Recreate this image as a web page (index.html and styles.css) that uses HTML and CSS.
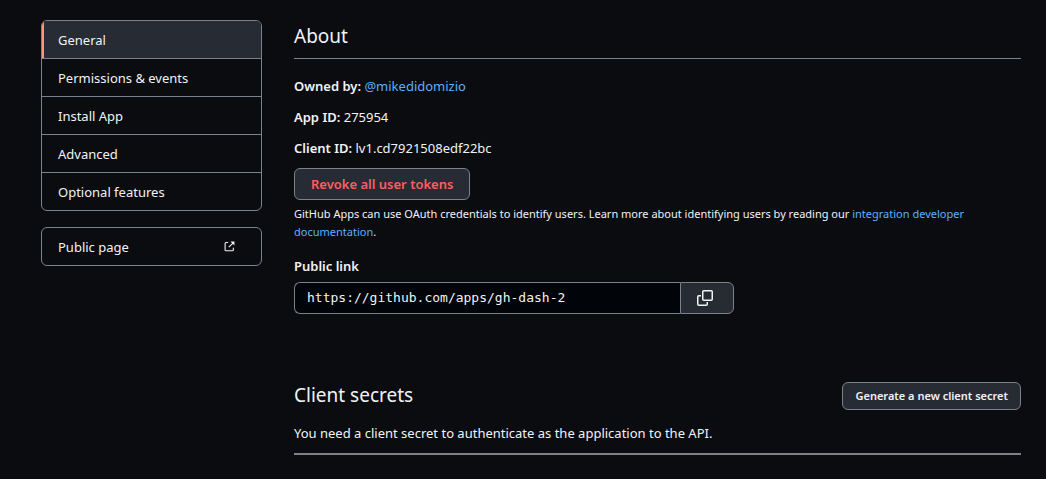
FILE: index.html
```html
<!DOCTYPE html>
<html lang="en">
<head>
<meta charset="utf-8">
<meta name="viewport" content="width=device-width, initial-scale=1">
<title>GitHub App settings</title>
<link rel="stylesheet" href="styles.css">
</head>
<body>
<div class="page">
  <nav class="sidebar" aria-label="App settings">
    <div class="menu">
      <a class="menu-item selected" href="#general" aria-current="page">General</a>
      <a class="menu-item" href="#permissions">Permissions &amp; events</a>
      <a class="menu-item" href="#install">Install App</a>
      <a class="menu-item" href="#advanced">Advanced</a>
      <a class="menu-item" href="#features">Optional features</a>
    </div>
    <div class="menu">
      <a class="menu-item" href="#public">Public page
        <svg class="external" viewBox="0 0 12 12" width="11" height="11" fill="none" stroke="currentColor" aria-hidden="true"><path d="M4.5 1.7H2.2q-1 0-1 1v7q0 1 1 1h7q1 0 1-1V7.3M5.2 6.8l4.6-4.6" stroke-width="1.2"/><path d="M7 .6h4.4V5z" fill="currentColor" stroke="none"/></svg>
      </a>
    </div>
  </nav>
  <main class="content">
    <h2 class="title about-title">About</h2>
    <div class="details">
      <p class="detail"><strong>Owned by:</strong> <a class="link" href="#owner">@mikedidomizio</a></p>
      <p class="detail"><strong>App ID:</strong> 275954</p>
      <p class="detail"><strong>Client ID:</strong> lv1.cd7921508edf22bc</p>
    </div>
    <button class="button danger" type="button">Revoke all user tokens</button>
    <p class="note">GitHub Apps can use OAuth credentials to identify users. Learn more about identifying users by reading our <a class="link" href="#docs">integration developer documentation</a>.</p>
    <label class="field-label" for="public-link">Public link</label>
    <div class="input-group">
      <input class="input" id="public-link" type="text" value="https://github.com/apps/gh-dash-2" readonly>
      <button class="copy" type="button" aria-label="Copy public link">
        <svg viewBox="0 0 16 16" width="16" height="16" fill="none" stroke="currentColor" stroke-width="1.5" aria-hidden="true"><rect x="5.75" y=".75" width="9.5" height="9.5" rx="1"/><path d="M4 5.75H1.75q-1 0-1 1v7.5q0 1 1 1h7.5q1 0 1-1V12"/></svg>
      </button>
    </div>
    <section class="secrets">
      <div class="secrets-head">
        <h2 class="title">Client secrets</h2>
        <button class="button small" type="button">Generate a new client secret</button>
      </div>
      <p class="secrets-text">You need a client secret to authenticate as the application to the API.</p>
    </section>
  </main>
</div>
</body>
</html>
```
FILE: styles.css
```css
* { box-sizing: border-box; }

body {
  margin: 0;
  background: #0a0c10;
  color: #f0f3f6;
  font: 13px/20px "Noto Sans", "Open Sans", sans-serif;
}

.page {
  display: flex;
  align-items: flex-start;
  gap: 32px;
  padding: 20px 25px 24px 41px;
}

.sidebar {
  flex: 0 0 221px;
  display: grid;
  gap: 16px;
}

.menu {
  border: 1px solid #7a828e;
  border-radius: 6px;
  overflow: hidden;
}

.menu-item {
  display: flex;
  align-items: center;
  justify-content: space-between;
  min-height: 37px;
  padding: 9px 26px 8px 16px;
  color: inherit;
  text-decoration: none;
}

.menu-item + .menu-item {
  min-height: 38px;
  border-top: 1px solid #7a828e;
}

.selected {
  background: #272b33;
  box-shadow: inset 2px 0 #ff967d;
}

.external { margin-bottom: 2px; }

.content { flex: 1; min-width: 0; }

.title {
  margin: 0;
  font-size: 19px;
  line-height: 26px;
  font-weight: 400;
}

.about-title {
  padding: 3px 0 9px;
  margin-bottom: 17px;
  border-bottom: 1px solid #7a828e;
}

.details {
  display: grid;
  gap: 11px;
  margin-bottom: 10px;
}

.detail { margin: 0; }

strong { font-weight: 600; }

.link { color: #5cb0ff; text-decoration: none; }

.button {
  border: 1px solid #7a828e;
  border-radius: 6px;
  background: #272b33;
  color: inherit;
  font: 600 13px/20px "Noto Sans", "Open Sans", sans-serif;
  padding: 5px 16px;
}

.danger { color: #ff5f5f; display: block; }

.small {
  font-size: 11px;
  line-height: 18px;
  padding: 4px 12px;
}

.note {
  margin: 5px 0 15px;
  font-size: 11px;
  line-height: 18px;
}

.field-label {
  display: block;
  margin-bottom: 6px;
  font-weight: 600;
}

.input-group { display: flex; max-width: 440px; }

.input {
  flex: 1;
  min-width: 0;
  height: 32px;
  padding: 4px 12px 6px;
  border: 1px solid #7a828e;
  border-right: 0;
  border-radius: 6px 0 0 6px;
  background: #010409;
  color: inherit;
  font: 13px/20px "DejaVu Sans Mono", monospace;
}

.copy {
  flex: 0 0 54px;
  display: flex;
  align-items: center;
  justify-content: center;
  padding: 0 4px 0 0;
  border: 1px solid #7a828e;
  border-radius: 0 6px 6px 0;
  background: #272b33;
  color: inherit;
}

.secrets {
  margin-top: 68px;
  padding-bottom: 10px;
  border-bottom: 2px solid #7a828e;
}

.secrets-head {
  display: flex;
  align-items: flex-start;
  justify-content: space-between;
}

.secrets-text { margin: 13px 0 0; }
```
